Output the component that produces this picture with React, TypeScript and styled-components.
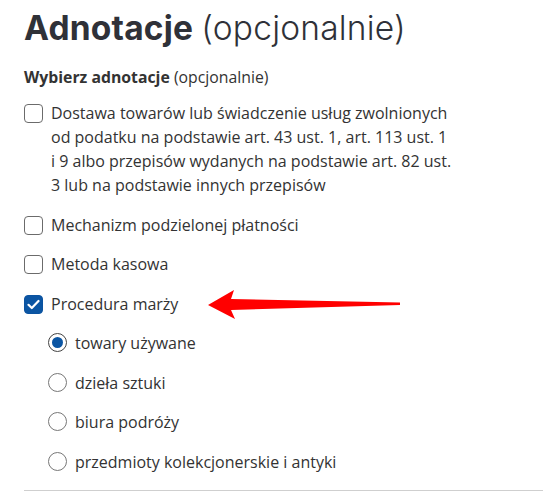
import React from "react";
import styled, {createGlobalStyle} from "styled-components";

const GlobalStyle = createGlobalStyle`
  html, body {
    margin: 0;
    padding: 0;
    background: #fff;
  }
  body {
    font-family: "Open Sans", "Noto Sans", sans-serif;
    color: #333;
  }
`;

const Section = styled.section`
  position: relative;
  padding: 7px 0 0 24px;
`;

const Title = styled.h2`
  margin: 0;
  font-family: Inter, "Noto Sans", sans-serif;
  font-size: 33.5px;
  line-height: 42px;
  font-weight: 700;
  color: #2f3138;
  letter-spacing: 0.2px;
`;

const TitleLight = styled.span`
  font-weight: 300;
  letter-spacing: 0.2px;
`;

const Subtitle = styled.div`
  margin-top: 18px;
  font-size: 15.8px;
  line-height: 20px;
  color: #333;
`;

const Strong = styled.b`
  font-weight: 700;
`;

const List = styled.div`
  display: flex;
  flex-direction: column;
  gap: 15.5px;
  margin-top: 14px;
`;

const Row = styled.label<{ $indent?: boolean }>`
  display: flex;
  align-items: flex-start;
  gap: 8px;
  padding-left: ${p => (p.$indent ? "24px" : "0")};
  font-size: 16px;
  line-height: 24px;
  color: #333;
`;

const Box = styled.span<{ $checked?: boolean }>`
  flex: none;
  box-sizing: border-box;
  width: 19px;
  height: 19px;
  margin-top: 3px;
  border-radius: 4px;
  border: 1px solid ${p => (p.$checked ? "#0b53a0" : "#6b6b6b")};
  background: ${p => (p.$checked ? "#0b55a3" : "#fff")};
  display: flex;
  align-items: center;
  justify-content: center;
`;

const Radio = styled.span<{ $checked?: boolean }>`
  flex: none;
  box-sizing: border-box;
  width: 19px;
  height: 19px;
  margin-top: 2px;
  border-radius: 50%;
  border: 1px solid ${p => (p.$checked ? "#444" : "#777")};
  display: flex;
  align-items: center;
  justify-content: center;

  &::after {
    content: "";
    width: 11px;
    height: 11px;
    border-radius: 50%;
    background: ${p => (p.$checked ? "#0b55a3" : "transparent")};
  }
`;

const Text = styled.span`
  max-width: 402px;
`;

const Divider = styled.hr`
  margin: 16px 0 0 0;
  border: none;
  border-top: 1px solid #cfcfcf;
`;

const Arrow = styled.svg`
  position: absolute;
  left: 200px;
  top: 285px;
`;

const checks = [
  {
    label:
      "Dostawa towarów lub świadczenie usług zwolnionych od podatku na podstawie art. 43 ust. 1, art. 113 ust. 1 i 9 albo przepisów wydanych na podstawie art. 82 ust. 3 lub na podstawie innych przepisów",
    checked: false,
  },
  {label: "Mechanizm podzielonej płatności", checked: false},
  {label: "Metoda kasowa", checked: false},
  {label: "Procedura marży", checked: true},
];

const radios = [
  {label: "towary używane", checked: true},
  {label: "dzieła sztuki", checked: false},
  {label: "biura podróży", checked: false},
  {label: "przedmioty kolekcjonerskie i antyki", checked: false},
];

export default function App() {
  return (
    <>
      <GlobalStyle/>
      <Section>
        <Title>
          Adnotacje <TitleLight>(opcjonalnie)</TitleLight>
        </Title>
        <Subtitle>
          <Strong>Wybierz adnotacje</Strong> (opcjonalnie)
        </Subtitle>
        <List>
          {checks.map(c => (
            <Row key={c.label}>
              <Box $checked={c.checked}>
                {c.checked && (
                  <svg width="13" height="11" viewBox="0 0 13 11">
                    <path d="M1.5 5.8 L4.8 9 L11.5 2" fill="none" stroke="#fff" strokeWidth="2.2"
                          strokeLinecap="round" strokeLinejoin="round"/>
                  </svg>
                )}
              </Box>
              <Text>{c.label}</Text>
            </Row>
          ))}
          {radios.map(r => (
            <Row key={r.label} $indent>
              <Radio $checked={r.checked}/>
              <Text>{r.label}</Text>
            </Row>
          ))}
        </List>
        <Divider/>
        <Arrow width="205" height="40" viewBox="0 0 205 40">
          <polygon points="8,20 34,5 31,14 200,17.5 200,20 31,25 35,34" fill="#ff0000"/>
        </Arrow>
      </Section>
    </>
  );
}
